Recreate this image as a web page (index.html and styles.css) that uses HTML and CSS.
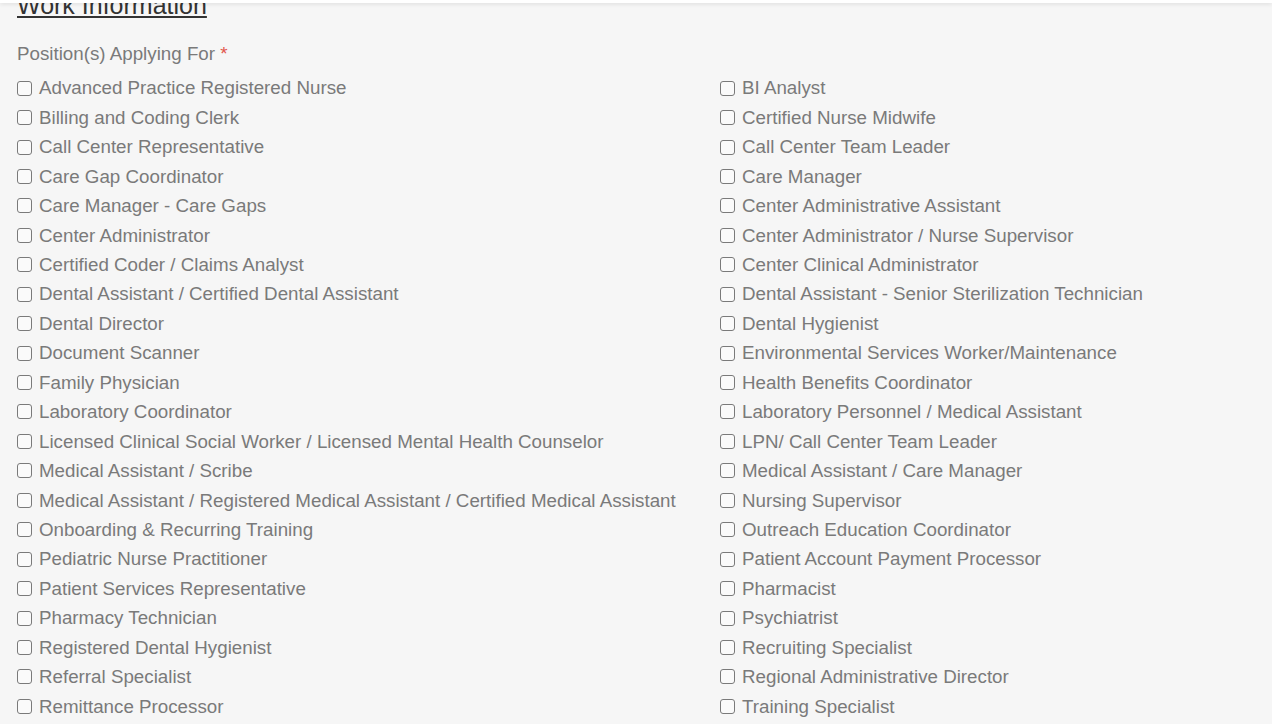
FILE: index.html
```html
<!DOCTYPE html>
<html lang="en">
<head>
<meta charset="utf-8">
<title>Work Information</title>
<link rel="stylesheet" href="styles.css">
</head>
<body>
<div class="topbar"></div>
<main class="form">
  <h2 class="section-title">Work Information</h2>
  <div class="field-label">Position(s) Applying For <span class="req">*</span></div>
  <div class="options">
    <label class="opt"><input type="checkbox"><span>Advanced Practice Registered Nurse</span></label>
    <label class="opt"><input type="checkbox"><span>BI Analyst</span></label>
    <label class="opt"><input type="checkbox"><span>Billing and Coding Clerk</span></label>
    <label class="opt"><input type="checkbox"><span>Certified Nurse Midwife</span></label>
    <label class="opt"><input type="checkbox"><span>Call Center Representative</span></label>
    <label class="opt"><input type="checkbox"><span>Call Center Team Leader</span></label>
    <label class="opt"><input type="checkbox"><span>Care Gap Coordinator</span></label>
    <label class="opt"><input type="checkbox"><span>Care Manager</span></label>
    <label class="opt"><input type="checkbox"><span>Care Manager - Care Gaps</span></label>
    <label class="opt"><input type="checkbox"><span>Center Administrative Assistant</span></label>
    <label class="opt"><input type="checkbox"><span>Center Administrator</span></label>
    <label class="opt"><input type="checkbox"><span>Center Administrator / Nurse Supervisor</span></label>
    <label class="opt"><input type="checkbox"><span>Certified Coder / Claims Analyst</span></label>
    <label class="opt"><input type="checkbox"><span>Center Clinical Administrator</span></label>
    <label class="opt"><input type="checkbox"><span>Dental Assistant / Certified Dental Assistant</span></label>
    <label class="opt"><input type="checkbox"><span>Dental Assistant - Senior Sterilization Technician</span></label>
    <label class="opt"><input type="checkbox"><span>Dental Director</span></label>
    <label class="opt"><input type="checkbox"><span>Dental Hygienist</span></label>
    <label class="opt"><input type="checkbox"><span>Document Scanner</span></label>
    <label class="opt"><input type="checkbox"><span>Environmental Services Worker/Maintenance</span></label>
    <label class="opt"><input type="checkbox"><span>Family Physician</span></label>
    <label class="opt"><input type="checkbox"><span>Health Benefits Coordinator</span></label>
    <label class="opt"><input type="checkbox"><span>Laboratory Coordinator</span></label>
    <label class="opt"><input type="checkbox"><span>Laboratory Personnel / Medical Assistant</span></label>
    <label class="opt"><input type="checkbox"><span>Licensed Clinical Social Worker / Licensed Mental Health Counselor</span></label>
    <label class="opt"><input type="checkbox"><span>LPN/ Call Center Team Leader</span></label>
    <label class="opt"><input type="checkbox"><span>Medical Assistant / Scribe</span></label>
    <label class="opt"><input type="checkbox"><span>Medical Assistant / Care Manager</span></label>
    <label class="opt"><input type="checkbox"><span>Medical Assistant / Registered Medical Assistant / Certified Medical Assistant</span></label>
    <label class="opt"><input type="checkbox"><span>Nursing Supervisor</span></label>
    <label class="opt"><input type="checkbox"><span>Onboarding &amp; Recurring Training</span></label>
    <label class="opt"><input type="checkbox"><span>Outreach Education Coordinator</span></label>
    <label class="opt"><input type="checkbox"><span>Pediatric Nurse Practitioner</span></label>
    <label class="opt"><input type="checkbox"><span>Patient Account Payment Processor</span></label>
    <label class="opt"><input type="checkbox"><span>Patient Services Representative</span></label>
    <label class="opt"><input type="checkbox"><span>Pharmacist</span></label>
    <label class="opt"><input type="checkbox"><span>Pharmacy Technician</span></label>
    <label class="opt"><input type="checkbox"><span>Psychiatrist</span></label>
    <label class="opt"><input type="checkbox"><span>Registered Dental Hygienist</span></label>
    <label class="opt"><input type="checkbox"><span>Recruiting Specialist</span></label>
    <label class="opt"><input type="checkbox"><span>Referral Specialist</span></label>
    <label class="opt"><input type="checkbox"><span>Regional Administrative Director</span></label>
    <label class="opt"><input type="checkbox"><span>Remittance Processor</span></label>
    <label class="opt"><input type="checkbox"><span>Training Specialist</span></label>
  </div>
</main>
</body>
</html>
```
FILE: styles.css
```css
html, body {
  margin: 0;
  padding: 0;
  background: #f6f6f6;
  overflow: hidden;
}

body {
  font-family: "Liberation Sans", Arial, sans-serif;
  color: #7a7a7a;
}

.topbar {
  position: fixed;
  top: 0;
  left: 0;
  right: 0;
  height: 3px;
  background: #ffffff;
  box-shadow: 0 1px 4px rgba(0, 0, 0, 0.12);
  z-index: 10;
}

.form {
  padding: 0 17px;
}

.section-title {
  margin: -8px 0 21px;
  font-size: 25px;
  line-height: 25px;
  font-weight: normal;
  color: #333333;
  text-decoration: underline;
  text-decoration-thickness: 2px;
  text-underline-offset: 2px;
  display: inline-block;
}

.field-label {
  font-size: 18.75px;
  line-height: 29.4px;
  margin-bottom: 5px;
}

.req {
  color: #e2574c;
}

.options {
  display: grid;
  grid-template-columns: 703px 1fr;
  font-size: 18.75px;
  line-height: 29.43px;
}

.opt {
  display: flex;
  align-items: center;
  white-space: nowrap;
}

.opt input {
  appearance: none;
  -webkit-appearance: none;
  width: 15px;
  height: 15px;
  margin: 0 7px 0 0;
  border: 1.5px solid #7a7a7a;
  border-radius: 3px;
  background: #fafafa;
  flex: none;
  box-sizing: border-box;
}
```
